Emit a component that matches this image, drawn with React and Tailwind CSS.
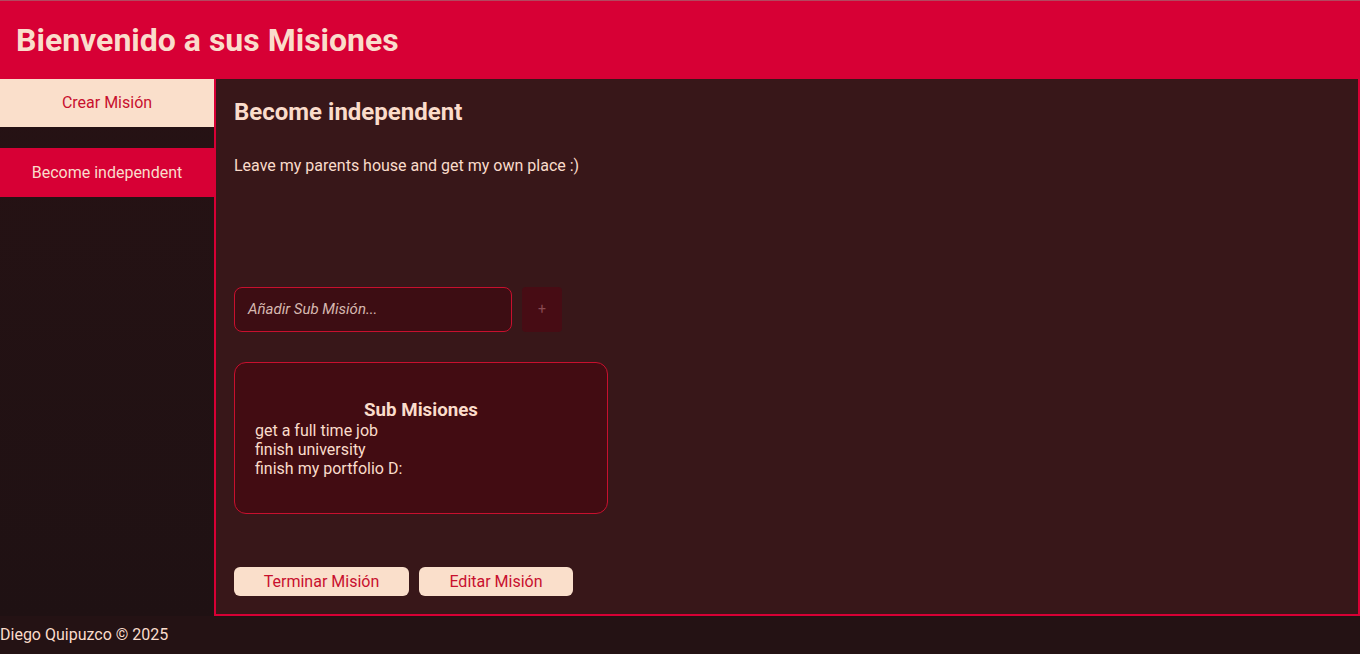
import React from 'react';

const subMisiones = ['get a full time job', 'finish university', 'finish my portfolio D:'];

export default function App() {
  return (
    <div className="h-screen flex flex-col bg-[#241214] text-[#fadccb] font-['Roboto',sans-serif] overflow-hidden">
      {/* Header */}
      <header className="h-[79px] shrink-0 bg-[#d70035] border-t border-[#b3485f] flex items-center px-4">
        <h1 className="text-[32px] font-bold text-[#fadccb]">Bienvenido a sus Misiones</h1>
      </header>

      <div className="flex flex-1 min-h-0">
        {/* Sidebar */}
        <aside className="w-[214px] shrink-0 bg-gradient-to-b from-[#261214] to-[#1f1113] flex flex-col">
          <button className="h-[48px] bg-[#fadfcb] text-[#c8102e] text-[16px]">Crear Misión</button>
          <div className="h-[21px]" />
          <button className="h-[49px] bg-[#d70035] text-[#fadccb] text-[16px]">Become independent</button>
        </aside>

        {/* Content */}
        <main className="flex-1 bg-[#381719] border-l-2 border-r-2 border-b-2 border-[#d70035] px-[18px] pt-[19px] flex flex-col">
          <h2 className="text-[24px] font-bold leading-[28px]">Become independent</h2>
          <p className="mt-[30px] text-[16px] leading-[20px]">Leave my parents house and get my own place :)</p>

          <div className="mt-[111px] flex gap-[10px]">
            <div className="w-[278px] h-[45px] rounded-lg border border-[#c8102e] bg-[#3d0d13] flex items-center px-[13px]">
              <span className="italic text-[15px] text-[#d6b8b0]">Añadir Sub Misión...</span>
            </div>
            <button className="w-[40px] h-[45px] rounded bg-[#470c14] text-[#8a4a52] text-[14px]">+</button>
          </div>

          <div className="mt-[30px] w-[374px] h-[152px] rounded-xl border border-[#c8102e] bg-[#420c12] px-[20px] pt-[36px]">
            <h3 className="text-center text-[18.72px] font-bold leading-[22px]">Sub Misiones</h3>
            <ul className="text-[16px] leading-[19px]">
              {subMisiones.map((s) => (
                <li key={s}>{s}</li>
              ))}
            </ul>
          </div>

          <div className="mt-[53px] flex gap-[10px]">
            <button className="w-[175px] h-[29px] rounded-md bg-[#fadfcb] text-[#c8102e] text-[16px]">Terminar Misión</button>
            <button className="w-[154px] h-[29px] rounded-md bg-[#fadfcb] text-[#c8102e] text-[16px]">Editar Misión</button>
          </div>
        </main>
      </div>

      {/* Footer */}
      <footer className="h-[38px] shrink-0 flex items-center text-[16px]">Diego Quipuzco © 2025</footer>
    </div>
  );
}
